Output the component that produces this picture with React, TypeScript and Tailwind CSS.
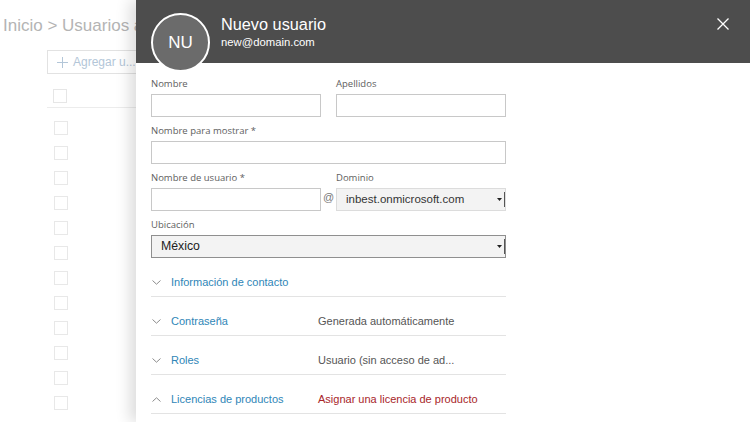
import React from 'react';

// --- Background page (faded, behind the flyout) ---
function BackgroundPage() {
  const rows = Array.from({ length: 12 });
  return (
    <div className="w-[136px] shrink-0 overflow-hidden bg-white">
      <div className="w-[400px] pt-[14px]">
        <div className="pl-[3px] h-[24px] leading-[24px] text-[17px] text-[#b4b4b4] whitespace-nowrap font-['Liberation_Sans',sans-serif]">
          Inicio &gt; Usuarios activos
        </div>
        <div className="pl-[47px] mt-[12px]">
          <div className="w-[110px] h-[24px] border border-[#e2e2e2] flex items-center pl-[9px] gap-[5px] text-[12px] text-[#b3c6d8] font-['Liberation_Sans',sans-serif]">
            <svg width="11" height="11" viewBox="0 0 11 11">
              <path d="M5.5 0v11M0 5.5h11" stroke="#b3c6d8" strokeWidth="1" />
            </svg>
            <span>Agregar u...</span>
          </div>
          <div className="mt-[10px] w-[300px] h-[24px] border-b border-[#ececec] flex items-center pl-[6px]">
            <div className="w-[14px] h-[14px] border border-[#e6e6e6]" />
            <span className="ml-[71px] text-[12px] text-[#cfcfcf] font-['Liberation_Sans',sans-serif]">Nombre</span>
          </div>
          <div className="flex flex-col pt-[7px]">
            {rows.map((_, i) => (
              <div key={i} className="h-[25px] flex items-center pl-[7px]">
                <div className="w-[14px] h-[14px] border border-[#e8e8e8]" />
              </div>
            ))}
          </div>
        </div>
      </div>
    </div>
  );
}

// --- Small form pieces ---
function Field({ label, className = '', children }: { label: string; className?: string; children: React.ReactNode }) {
  return (
    <div className={className}>
      <div className="h-[14px] leading-[14px] mb-[3px] text-[9.5px] text-[#5e5e5e] font-['Open_Sans',sans-serif]">{label}</div>
      {children}
    </div>
  );
}

function TextBox() {
  return <div className="h-[23px] border border-[#c8c8c8] bg-white" />;
}

function SelectArrow() {
  return (
    <div className="flex items-center h-full">
      <svg width="5" height="3" viewBox="0 0 5 3" className="mr-[2px]">
        <path d="M0 0h5L2.5 3z" fill="#222" />
      </svg>
      <div className="w-[1px] h-[15px] bg-[#555]" />
    </div>
  );
}

function Chevron({ up }: { up?: boolean }) {
  return (
    <svg width="9" height="5" viewBox="0 0 9 5" className="shrink-0">
      <path d={up ? 'M0.5 4.5L4.5 0.8L8.5 4.5' : 'M0.5 0.5L4.5 4.2L8.5 0.5'} fill="none" stroke="#8c8c8c" strokeWidth="1" />
    </svg>
  );
}

interface Section {
  title: string;
  value?: string;
  red?: boolean;
  open?: boolean;
}

const SECTIONS: Section[] = [
  { title: 'Información de contacto' },
  { title: 'Contraseña', value: 'Generada automáticamente' },
  { title: 'Roles', value: 'Usuario (sin acceso de ad...' },
  { title: 'Licencias de productos', value: 'Asignar una licencia de producto', red: true, open: true },
];

// --- Flyout panel ---
function NewUserPanel() {
  return (
    <div className="flex-1 flex flex-col bg-white shadow-[-6px_0_14px_rgba(0,0,0,0.14)] relative">
      {/* Header */}
      <div className="h-[63px] shrink-0 bg-[#4d4d4d] flex items-start pl-[15px] pr-[21px]">
        <div className="relative z-10 mt-[13px] w-[59px] h-[59px] rounded-full bg-[#6b6b6b] border-2 border-white flex items-center justify-center text-white text-[17px] font-['Liberation_Sans',sans-serif]">
          NU
        </div>
        <div className="ml-[11px] mt-[14px] text-white font-['Liberation_Sans',sans-serif]">
          <div className="text-[16.3px] leading-[21px]">Nuevo usuario</div>
          <div className="text-[11.3px] leading-[14px]">new@domain.com</div>
        </div>
        <div className="flex-1" />
        <svg width="12" height="12" viewBox="0 0 12 12" className="mt-[18px]">
          <path d="M0.5 0.5L11.5 11.5M11.5 0.5L0.5 11.5" stroke="#fff" strokeWidth="1.3" />
        </svg>
      </div>

      {/* Form */}
      <div className="pl-[15px] w-[370px] pt-[14px]">
        <div className="flex gap-[15px]">
          <Field label="Nombre" className="w-[170px]"><TextBox /></Field>
          <Field label="Apellidos" className="w-[170px]"><TextBox /></Field>
        </div>
        <Field label="Nombre para mostrar *" className="mt-[7px] w-[355px]"><TextBox /></Field>
        <div className="flex mt-[7px]">
          <Field label="Nombre de usuario *" className="w-[170px]"><TextBox /></Field>
          <div className="w-[15px] flex items-end justify-center pb-[6px] text-[11px] text-[#777] font-['Liberation_Sans',sans-serif]">@</div>
          <Field label="Dominio" className="w-[170px]">
            <div className="h-[23px] border border-[#dcdcdc] bg-[#f3f3f3] flex items-center justify-between pl-[9px] text-[11.5px] text-[#333] font-['Liberation_Sans',sans-serif]">
              <span>inbest.onmicrosoft.com</span>
              <SelectArrow />
            </div>
          </Field>
        </div>
        <Field label="Ubicación" className="mt-[7px] w-[355px]">
          <div className="h-[23px] border border-[#8f8f8f] bg-[#f3f3f3] flex items-center justify-between pl-[9px] text-[12.3px] text-[#222] font-['Liberation_Sans',sans-serif]">
            <span>México</span>
            <SelectArrow />
          </div>
        </Field>

        {/* Sections */}
        <div className="w-[355px] flex flex-col">
          {SECTIONS.map((s) => (
            <div key={s.title} className="h-[39px] border-b border-[#e3e3e3] flex items-start pt-[16px] font-['Liberation_Sans',sans-serif] text-[11px]">
              <div className="h-[16px] flex items-center pl-[1px] w-[20px]">
                <Chevron up={s.open} />
              </div>
              <span className="w-[147px] leading-[16px] text-[#2f86b7]">{s.title}</span>
              {s.value && (
                <span className={`leading-[16px] ${s.red ? 'text-[#a8262a]' : 'text-[#555]'}`}>{s.value}</span>
              )}
            </div>
          ))}
        </div>
      </div>
    </div>
  );
}

export default function App() {
  return (
    <div className="w-[750px] h-[422px] overflow-hidden flex bg-white">
      <BackgroundPage />
      <NewUserPanel />
    </div>
  );
}
